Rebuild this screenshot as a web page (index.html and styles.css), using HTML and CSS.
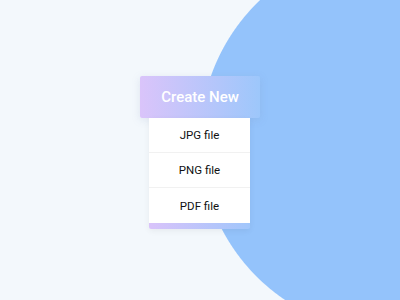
FILE: index.html
```html
<!DOCTYPE html>
<html lang="en">
<head>
    <meta charset="UTF-8">
    <meta name="viewport" content="width=device-width, initial-scale=1.0">
    <title>Create New</title>
    <link rel="stylesheet" href="styles.css">
</head>
<body>
    <div class="dropdown">
        <button type="button" class="dropdown-toggle">Create New</button>
        <ul class="dropdown-menu">
            <li>JPG file</li>
            <li>PNG file</li>
            <li>PDF file</li>
        </ul>
    </div>
</body>
</html>
```

FILE: styles.css
```css
body {
    font-family: Roboto, "Liberation Sans", sans-serif;
    margin: 0;
    padding: 0;
    width: 400px;
    height: 300px;
    overflow: hidden;
    background: radial-gradient(circle 193px at 393px 140px, #94c3fb 192.5px, #f3f8fc 193.5px);
    display: flex;
    justify-content: center;
    align-items: flex-start;
}

.dropdown {
    margin-top: 76px;
    width: 120px;
    display: flex;
    flex-direction: column;
}

.dropdown-toggle {
    height: 42px;
    width: 120px;
    border: none;
    border-radius: 2px;
    padding: 0;
    color: #fff;
    font-family: inherit;
    font-size: 15px;
    font-weight: 500;
    background: linear-gradient(to right, #dac4fa, #9dc7fb);
    box-shadow: 0 2px 8px rgba(120, 140, 180, 0.18);
    cursor: pointer;
}

.dropdown-menu {
    list-style: none;
    margin: 0 0 0 9px;
    padding: 0 0 6px 0;
    width: 101px;
    background: linear-gradient(to right, #d9c3fa, #a0c6fb);
    border-radius: 0 0 2px 2px;
    box-shadow: 0 2px 6px rgba(0, 0, 0, 0.06);
}

.dropdown-menu li {
    height: 35px;
    display: flex;
    align-items: center;
    justify-content: center;
    background-color: #fff;
    color: #111;
    font-size: 11.5px;
    border-bottom: 1px solid #f1f1f1;
    box-sizing: border-box;
}

.dropdown-menu li:last-child {
    border-bottom: none;
}
```
